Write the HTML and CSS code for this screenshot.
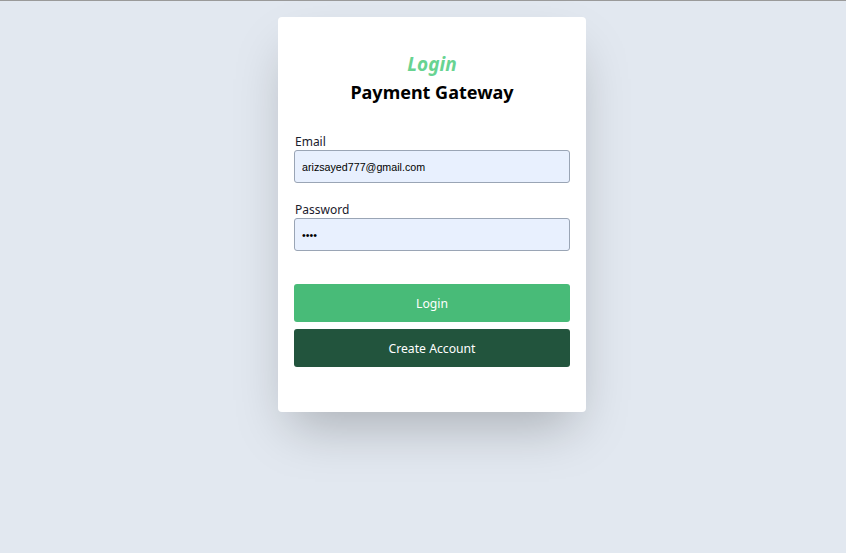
FILE: index.html
```html
<!DOCTYPE html>
<html>
<head>
<meta charset="utf-8">
<link rel="stylesheet" href="styles.css">
</head>
<body>
<div class="page">
  <form class="card">
    <div class="head">
      <div class="title">Login</div>
      <div class="subtitle">Payment Gateway</div>
    </div>
    <div class="field">
      <label class="label">Email</label>
      <input class="input" type="email" value="arizsayed777@gmail.com">
    </div>
    <div class="field">
      <label class="label">Password</label>
      <input class="input" type="password" value="1234">
    </div>
    <div class="actions">
      <button type="button" class="btn btn-primary">Login</button>
      <button type="button" class="btn btn-dark">Create Account</button>
    </div>
  </form>
</div>
</body>
</html>
```
FILE: styles.css
```css
html, body {
  margin: 0;
  padding: 0;
}
body {
  background: #e2e8f0;
  border-top: 1px solid #9a9a9a;
  height: 552px;
  font-family: "Noto Sans", "Open Sans", sans-serif;
}
.page {
  display: flex;
  justify-content: center;
  padding-top: 16px;
  padding-left: 18px;
}
.card {
  width: 308px;
  box-sizing: border-box;
  background: #fff;
  border-radius: 4px;
  padding: 33px 16px 45px;
  box-shadow: 0 25px 50px -12px rgba(0, 0, 0, 0.25);
  display: flex;
  flex-direction: column;
}
.head {
  text-align: center;
  margin-bottom: 27px;
}
.title {
  color: #68d391;
  font-size: 19px;
  font-weight: 700;
  font-style: italic;
  line-height: 28px;
}
.subtitle {
  color: #000;
  font-size: 18px;
  font-weight: 700;
  line-height: 28px;
}
.field {
  display: flex;
  flex-direction: column;
  margin-bottom: 18px;
}
.label {
  font-size: 12px;
  color: #1a202c;
  line-height: 17px;
  padding-left: 1px;
}
.input {
  height: 33px;
  box-sizing: border-box;
  border: 1px solid #9aa5b5;
  border-radius: 3px;
  background: #e8f0fe;
  padding: 0 7px;
  font-family: "Liberation Sans", Arial, sans-serif;
  font-size: 10.7px;
  color: #000;
  outline: none;
}
.actions {
  display: flex;
  flex-direction: column;
  gap: 7px;
  margin-top: 15px;
}
.btn {
  height: 38px;
  border: none;
  border-radius: 3px;
  color: #fff;
  font-family: "Noto Sans", "Open Sans", sans-serif;
  font-size: 12.2px;
  cursor: pointer;
}
.btn-primary {
  background: #48bb78;
}
.btn-dark {
  background: #22543d;
}
```
